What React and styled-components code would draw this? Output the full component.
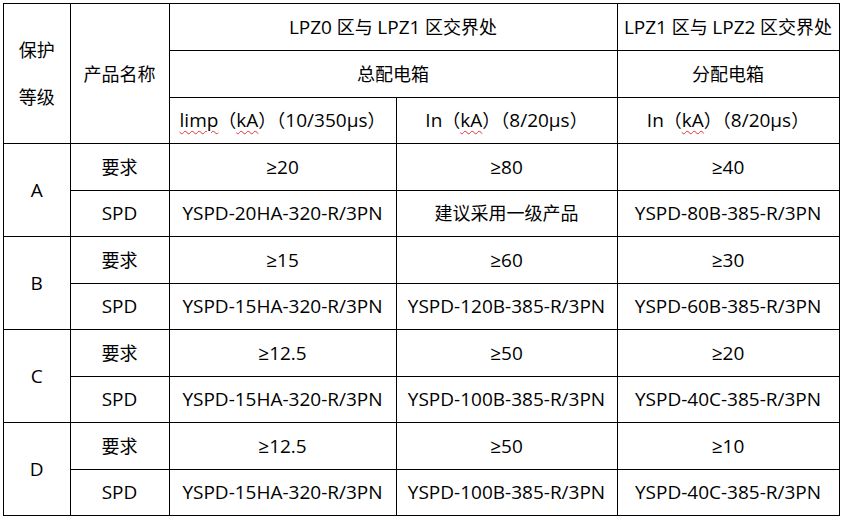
import React from "react";
import styled, { createGlobalStyle } from "styled-components";

const Global = createGlobalStyle`
  html, body { margin: 0; padding: 0; background: #fff; }
  body {
    font-family: "Open Sans", "Noto Sans CJK SC", sans-serif;
    color: #000;
  }
`;

const Page = styled.div`
  padding: 3px 0 0 3px;
`;

const Table = styled.table`
  border-collapse: collapse;
  table-layout: fixed;
  width: 836px;
  font-size: 18px;
`;

const Row = styled.tr`
  height: ${(p) => p.$h || 46.5}px;
`;

const Cell = styled.td`
  border: 1px solid #000;
  padding: 0;
  text-align: center;
  vertical-align: middle;
  white-space: nowrap;
  font-size: ${(p) => (p.$latin ? 19 : 18)}px;
  line-height: ${(p) => p.$lh || 24}px;
`;

const Lat = styled.span`
  font-size: 19px;
  text-decoration: ${(p) => (p.$wavy ? "underline wavy #e53030" : "none")};
  text-decoration-thickness: 1px;
  text-underline-offset: 3px;
`;

const cols = [66.5, 99, 227, 221, 222];

const grades = [
  { g: "A", req: ["≥20", "≥80", "≥40"], spd: ["YSPD-20HA-320-R/3PN", "建议采用一级产品", "YSPD-80B-385-R/3PN"] },
  { g: "B", req: ["≥15", "≥60", "≥30"], spd: ["YSPD-15HA-320-R/3PN", "YSPD-120B-385-R/3PN", "YSPD-60B-385-R/3PN"] },
  { g: "C", req: ["≥12.5", "≥50", "≥20"], spd: ["YSPD-15HA-320-R/3PN", "YSPD-100B-385-R/3PN", "YSPD-40C-385-R/3PN"] },
  { g: "D", req: ["≥12.5", "≥50", "≥10"], spd: ["YSPD-15HA-320-R/3PN", "YSPD-100B-385-R/3PN", "YSPD-40C-385-R/3PN"] },
];

const isLatin = (t) => /^[\x00-\x7F≥μ]+$/.test(t);

export default function App() {
  return (
    <>
      <Global />
      <Page>
        <Table>
          <colgroup>
            {cols.map((w, i) => (
              <col key={i} style={{ width: w }} />
            ))}
          </colgroup>
          <tbody>
            <Row $h={47}>
              <Cell rowSpan={3} $lh={47}>
                保护
                <br />
                等级
              </Cell>
              <Cell rowSpan={3}>产品名称</Cell>
              <Cell colSpan={2}>
                <Lat>LPZ0</Lat> 区与 <Lat>LPZ1</Lat> 区交界处
              </Cell>
              <Cell>
                <Lat>LPZ1</Lat> 区与 <Lat>LPZ2</Lat> 区交界处
              </Cell>
            </Row>
            <Row $h={46.5}>
              <Cell colSpan={2}>总配电箱</Cell>
              <Cell>分配电箱</Cell>
            </Row>
            <Row $h={46.5}>
              <Cell>
                <Lat $wavy>limp</Lat>（<Lat $wavy>kA</Lat>）（<Lat>10/350μs</Lat>）
              </Cell>
              <Cell>
                <Lat>In</Lat>（<Lat $wavy>kA</Lat>）（<Lat>8/20μs</Lat>）
              </Cell>
              <Cell>
                <Lat>In</Lat>（<Lat $wavy>kA</Lat>）（<Lat>8/20μs</Lat>）
              </Cell>
            </Row>
            {grades.map((d) => (
              <React.Fragment key={d.g}>
                <Row>
                  <Cell rowSpan={2} $latin>
                    {d.g}
                  </Cell>
                  <Cell>要求</Cell>
                  {d.req.map((t, i) => (
                    <Cell key={i} $latin>
                      {t}
                    </Cell>
                  ))}
                </Row>
                <Row>
                  <Cell $latin>SPD</Cell>
                  {d.spd.map((t, i) => (
                    <Cell key={i} $latin={isLatin(t)}>
                      {t}
                    </Cell>
                  ))}
                </Row>
              </React.Fragment>
            ))}
          </tbody>
        </Table>
      </Page>
    </>
  );
}
